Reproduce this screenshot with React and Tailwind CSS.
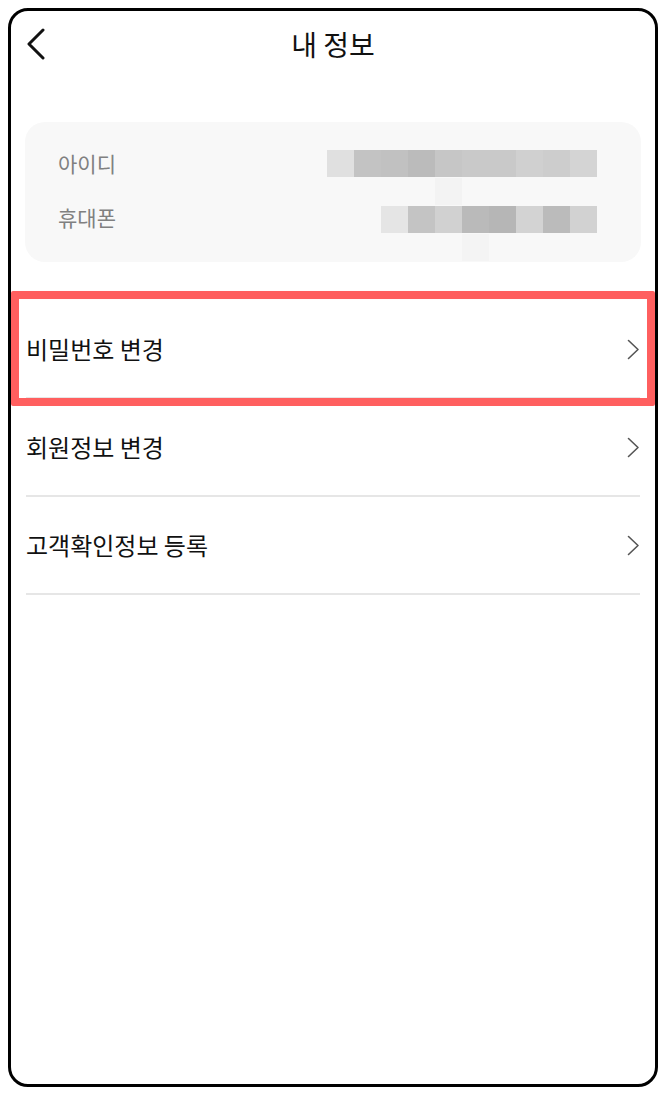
import React from "react";

const mosaic = [
  ["bg-[#e0e0e0]", "bg-[#c3c3c3]", "bg-[#c1c1c1]", "bg-[#bbbbbb]", "bg-[#c6c6c6]", "bg-[#c9c9c9]", "bg-[#c9c9c9]", "bg-[#d0d0d0]", "bg-[#cdcdcd]", "bg-[#d4d4d4]"],
  ["", "", "", "", "bg-[#f3f3f3]", "", "", "", "", ""],
  ["", "", "bg-[#e5e5e5]", "bg-[#c4c4c4]", "bg-[#d1d1d1]", "bg-[#bababa]", "bg-[#b6b6b6]", "bg-[#d3d3d3]", "bg-[#bbbbbb]", "bg-[#d2d2d2]"],
  ["", "", "", "", "", "bg-[#f4f4f4]", "", "", "", ""],
];

const menu = ["비밀번호 변경", "회원정보 변경", "고객확인정보 등록"];

function ChevronRight() {
  return (
    <svg width="13" height="21" viewBox="0 0 13 21" fill="none">
      <path d="M1.5 1.5 L11 10.5 L1.5 19.5" stroke="#555" strokeWidth="1.6" strokeLinecap="round" strokeLinejoin="round" />
    </svg>
  );
}

export default function App() {
  return (
    <div
      className="w-[666px] h-[1095px] bg-white p-[8px]"
      style={{ fontFamily: '"Noto Sans CJK KR", "Noto Sans", sans-serif' }}
    >
      <div className="h-full border-[3px] border-black rounded-[20px] flex flex-col">
        {/* header */}
        <div className="h-[66px] flex items-center pl-[15px] pr-[15px]">
          <div className="w-[60px] flex items-center">
            <svg width="20" height="32" viewBox="0 0 20 32" fill="none">
              <path d="M17 2 L3 16 L17 30" stroke="#111" strokeWidth="3" strokeLinecap="round" strokeLinejoin="round" />
            </svg>
          </div>
          <div className="flex-1 text-center text-[28px] text-[#111] leading-none">내 정보</div>
          <div className="w-[60px]" />
        </div>

        {/* account card */}
        <div className="mx-[14px] mt-[45px] h-[140px] bg-[#f8f8f8] rounded-[20px] flex justify-between pt-[28px] pl-[33px] pr-[44px]">
          <div className="flex flex-col gap-[27px] text-[21px] text-[#808080]">
            <div className="leading-[27px]">아이디</div>
            <div className="leading-[27px]">휴대폰</div>
          </div>
          <div className="grid grid-cols-10">
            {mosaic.flat().map((c, i) => (
              <div key={i} className={`w-[27px] h-[27px] ${c}`} />
            ))}
          </div>
        </div>

        {/* menu list */}
        <div className="relative mt-[39px] px-[15px]">
          {menu.map((label) => (
            <div
              key={label}
              className="h-[98px] flex items-center justify-between border-b-2 border-[#e6e6e6]"
            >
              <span className="text-[24px] text-[#111]">{label}</span>
              <ChevronRight />
            </div>
          ))}
          <div className="absolute left-0 right-0 top-[-10px] h-[115px] border-[8px] border-[#ff5f5f] rounded-[2px] pointer-events-none" />
        </div>
      </div>
    </div>
  );
}
